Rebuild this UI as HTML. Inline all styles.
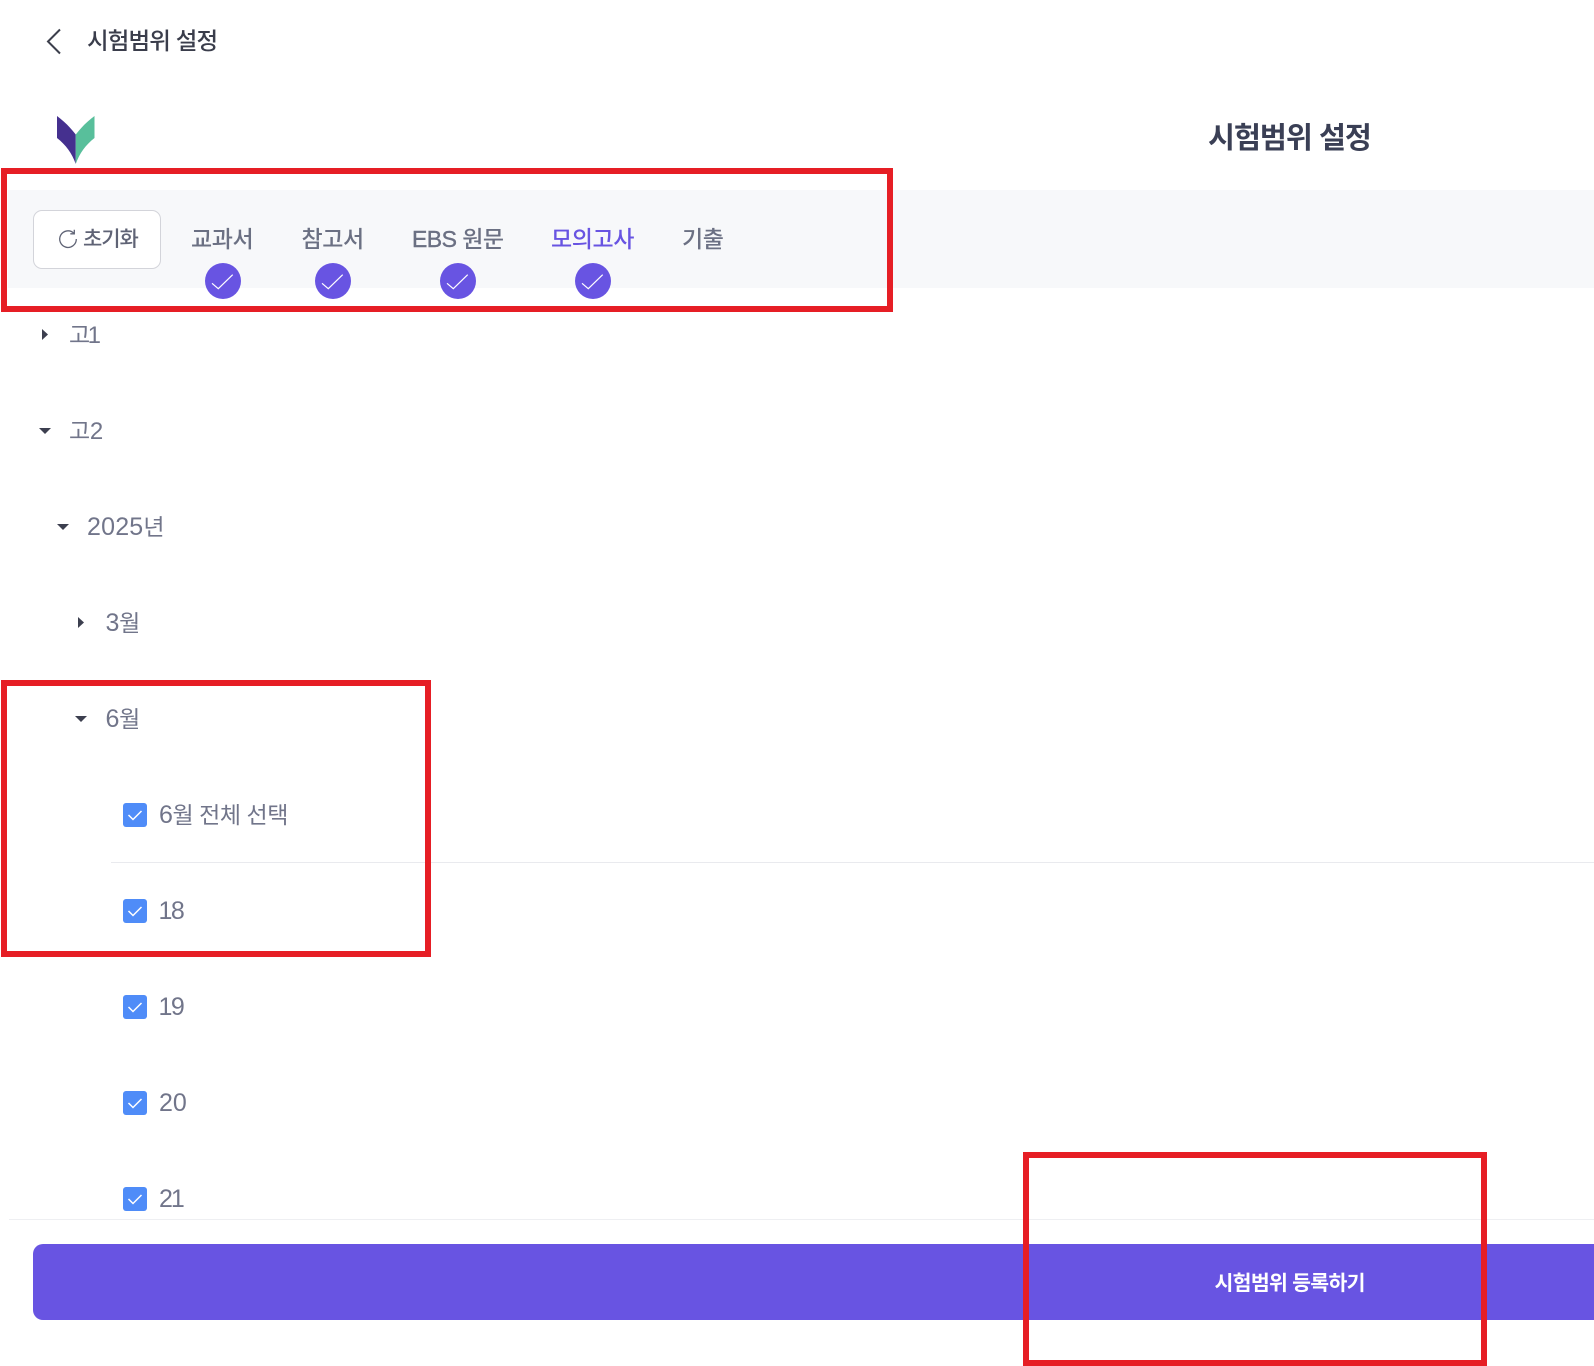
<!DOCTYPE html>
<html lang="ko">
<head>
<meta charset="utf-8">
<title>시험범위 설정</title>
<style>
html,body{margin:0;padding:0;background:#fff;}
body{width:1594px;height:1366px;position:relative;overflow:hidden;font-family:"Liberation Sans","Noto Sans CJK KR",sans-serif;}
.t{position:absolute;white-space:nowrap;line-height:30px;height:30px;}
.a{position:absolute;display:block;}
.tab{font-size:23px;color:#6b7083;font-weight:500;letter-spacing:-.4px;top:224px;}
.tree{font-size:23px;color:#71758a;letter-spacing:-.3px;}
.d{font-size:25px;}
.red{position:absolute;border:6px solid #e61e25;box-sizing:border-box;z-index:5;}
.cb{position:absolute;left:123px;width:24px;height:24px;border-radius:3px;background:#4f8cf8;}
.line{position:absolute;height:1px;background:#e9eaee;}
</style>
</head>
<body>
<svg class="a" style="left:45px;top:27px" width="18" height="30" viewBox="0 0 18 30"><path d="M15 2.500L3 14.500L15 26.500" fill="none" stroke="#3c3f4c" stroke-width="2"/></svg>
<div class="t" style="left:87px;top:26px;font-size:23.500px;font-weight:500;color:#3a3d4b;letter-spacing:-.85px">시험범위 설정</div>

<svg class="a" style="left:57px;top:116px" width="37.500" height="48" viewBox="0 0 38 48" preserveAspectRatio="none">
<path d="M0 0C7 5 13 11 19 18.500V48C15 37 9 29 0 22Z" fill="#45308f"/>
<path d="M38 0C31 5 25 11 19 18.500V48C23 37 29 29 38 22Z" fill="#58bf9b"/>
</svg>

<div class="t" style="left:1208px;top:123px;font-size:29.300px;line-height:32px;height:32px;font-weight:700;color:#3a3f55;letter-spacing:-1px">시험범위 설정</div>

<div class="a" style="left:8px;right:0;top:190px;height:98px;background:#f7f8fa"></div>

<div class="a" style="left:33px;top:210px;width:128px;height:59px;box-sizing:border-box;background:#fff;border:1px solid #d3d4da;border-radius:9px"></div>
<svg class="a" style="left:57px;top:228px" width="22" height="22" viewBox="0 0 22 22"><path d="M16.800 5.200A8.300 8.300 0 1 0 19.300 11" fill="none" stroke="#5f6375" stroke-width="1.300"/><path d="M17.300 1.800V5.800H13.300" fill="none" stroke="#5f6375" stroke-width="1.300"/></svg>
<div class="t" style="left:83px;top:225px;font-size:21px;font-weight:500;color:#5f6375;letter-spacing:-1.100px">초기화</div>

<div class="t tab" style="left:191px">교과서</div>
<div class="t tab" style="left:301.500px">참고서</div>
<div class="t tab" style="left:412px;letter-spacing:-.55px"><span style="-webkit-text-stroke:.4px #6b7083">EBS</span> 원문</div>
<div class="t tab" style="left:551px;color:#6854e2">모의고사</div>
<div class="t tab" style="left:682px">기출</div>

<svg class="a" style="left:205px;top:263px" width="36" height="36" viewBox="0 0 36 36"><circle cx="18" cy="18" r="18" fill="#6854e2"/><path d="M7 20.300L13.300 25.700L27.700 11.700" fill="none" stroke="#fff" stroke-width="1.200"/></svg>
<svg class="a" style="left:315px;top:263px" width="36" height="36" viewBox="0 0 36 36"><circle cx="18" cy="18" r="18" fill="#6854e2"/><path d="M7 20.300L13.300 25.700L27.700 11.700" fill="none" stroke="#fff" stroke-width="1.200"/></svg>
<svg class="a" style="left:440px;top:263px" width="36" height="36" viewBox="0 0 36 36"><circle cx="18" cy="18" r="18" fill="#6854e2"/><path d="M7 20.300L13.300 25.700L27.700 11.700" fill="none" stroke="#fff" stroke-width="1.200"/></svg>
<svg class="a" style="left:575px;top:263px" width="36" height="36" viewBox="0 0 36 36"><circle cx="18" cy="18" r="18" fill="#6854e2"/><path d="M7 20.300L13.300 25.700L27.700 11.700" fill="none" stroke="#fff" stroke-width="1.200"/></svg>

<svg class="a" style="left:42px;top:329px" width="6" height="11" viewBox="0 0 6 11"><path d="M0 0L6 5.500L0 11Z" fill="#3c3f4f"/></svg>
<div class="t tree" style="left:69px;top:320px"><span style="letter-spacing:0">고</span><span style="letter-spacing:-2px;margin-left:-2.500px;font-size:24px">1</span></div>

<svg class="a" style="left:39px;top:428px" width="12" height="6" viewBox="0 0 12 6"><path d="M0 0H12L6 6Z" fill="#3c3f4f"/></svg>
<div class="t tree" style="left:69px;top:416px">고<span class="d" style="font-size:24px">2</span></div>

<svg class="a" style="left:57px;top:524px" width="12" height="6" viewBox="0 0 12 6"><path d="M0 0H12L6 6Z" fill="#3c3f4f"/></svg>
<div class="t tree" style="left:87px;top:512px"><span class="d" style="letter-spacing:.2px">2025</span>년</div>

<svg class="a" style="left:78px;top:617px" width="6" height="11" viewBox="0 0 6 11"><path d="M0 0L6 5.500L0 11Z" fill="#3c3f4f"/></svg>
<div class="t tree" style="left:105.500px;top:608px"><span class="d">3</span>월</div>

<svg class="a" style="left:75px;top:716px" width="12" height="6" viewBox="0 0 12 6"><path d="M0 0H12L6 6Z" fill="#3c3f4f"/></svg>
<div class="t tree" style="left:105.500px;top:704px"><span class="d">6</span>월</div>

<div class="cb" style="top:803px"><svg width="24" height="24" viewBox="0 0 24 24"><path d="M5.500 12L10 16.500L18.500 8" fill="none" stroke="#fff" stroke-width="1.500"/></svg></div>
<div class="t tree" style="left:159px;top:800px;letter-spacing:-.45px"><span class="d">6</span>월 전체 선택</div>
<div class="line" style="left:111px;right:0;top:862px"></div>

<div class="cb" style="top:899px"><svg width="24" height="24" viewBox="0 0 24 24"><path d="M5.500 12L10 16.500L18.500 8" fill="none" stroke="#fff" stroke-width="1.500"/></svg></div>
<div class="t tree" style="left:158.500px;top:896px"><span class="d" style="letter-spacing:-1.500px">1</span><span class="d">8</span></div>

<div class="cb" style="top:995px"><svg width="24" height="24" viewBox="0 0 24 24"><path d="M5.500 12L10 16.500L18.500 8" fill="none" stroke="#fff" stroke-width="1.500"/></svg></div>
<div class="t tree" style="left:158.500px;top:992px"><span class="d" style="letter-spacing:-1.500px">1</span><span class="d">9</span></div>

<div class="cb" style="top:1091px"><svg width="24" height="24" viewBox="0 0 24 24"><path d="M5.500 12L10 16.500L18.500 8" fill="none" stroke="#fff" stroke-width="1.500"/></svg></div>
<div class="t tree" style="left:159px;top:1088px"><span class="d" style="letter-spacing:0">20</span></div>

<div class="cb" style="top:1187px"><svg width="24" height="24" viewBox="0 0 24 24"><path d="M5.500 12L10 16.500L18.500 8" fill="none" stroke="#fff" stroke-width="1.500"/></svg></div>
<div class="t tree" style="left:159px;top:1184px"><span class="d" style="letter-spacing:-2px">2</span><span class="d">1</span></div>

<div class="line" style="left:9px;right:0;top:1219px;background:#eeeff2"></div>

<div class="a" style="left:33px;right:0;top:1244px;height:76px;background:#6854e2;border-radius:10px 0 0 10px"></div>
<div class="t" style="left:1214.500px;top:1269px;font-size:20.500px;font-weight:700;color:#fff;letter-spacing:-.7px">시험범위 등록하기</div>

<div class="red" style="left:1px;top:168px;width:892px;height:144px"></div>
<div class="red" style="left:1px;top:680px;width:430px;height:277px"></div>
<div class="red" style="left:1023px;top:1152px;width:464px;height:214px"></div>
</body>
</html>
